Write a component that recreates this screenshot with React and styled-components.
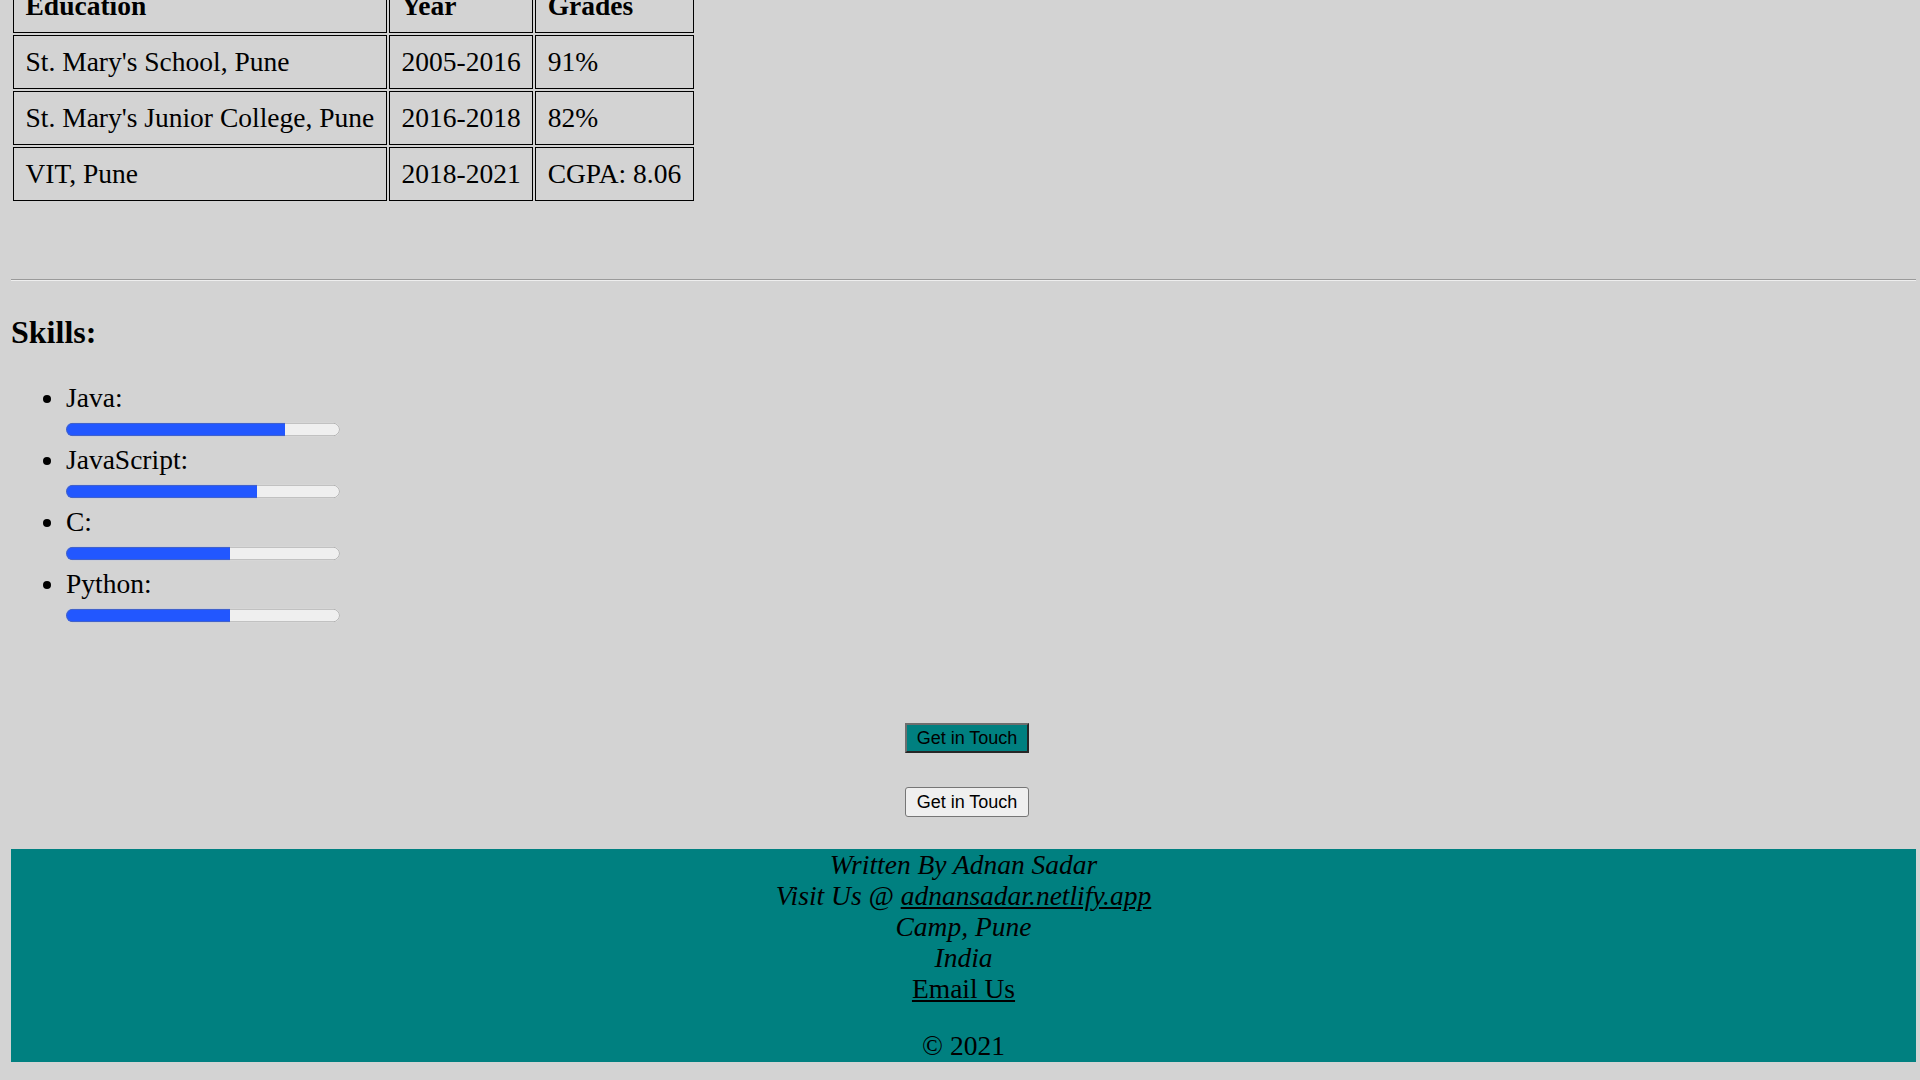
import React, { useLayoutEffect, useRef } from "react";
import styled, { createGlobalStyle } from "styled-components";

const Global = createGlobalStyle`
  html, body {
    margin: 0;
    padding: 0;
    background: #d3d3d3;
  }
  body {
    font-family: "Liberation Serif", "Times New Roman", serif;
    font-size: 27.5px;
    line-height: 31px;
    color: #000;
  }
  ::-webkit-scrollbar {
    width: 15px;
    height: 15px;
    background: #f1f1f1;
  }
  ::-webkit-scrollbar-track {
    background: #f1f1f1;
  }
  ::-webkit-scrollbar-thumb {
    background: #c1c1c1;
    background-clip: padding-box;
    border-style: solid;
    border-color: transparent;
    border-width: 2px 1px 1px 2px;
  }
  ::-webkit-scrollbar-corner {
    background: #dcdcdc;
  }
  ::-webkit-scrollbar-button:single-button {
    display: block;
    width: 15px;
    height: 15px;
    background-color: #f1f1f1;
    background-repeat: no-repeat;
    background-position: center;
  }
  ::-webkit-scrollbar-button:single-button:vertical:decrement {
    background-image: conic-gradient(from 135deg at 50% 0, #505050 90deg, transparent 0);
    background-size: 8px 4px;
  }
  ::-webkit-scrollbar-button:single-button:vertical:increment {
    background-image: conic-gradient(from -45deg at 50% 100%, #505050 90deg, transparent 0);
    background-size: 8px 4px;
  }
  ::-webkit-scrollbar-button:single-button:horizontal:decrement {
    background-image: conic-gradient(from 45deg at 0 50%, #505050 90deg, transparent 0);
    background-size: 4px 8px;
  }
  ::-webkit-scrollbar-button:single-button:horizontal:increment {
    background-image: conic-gradient(from 225deg at 100% 50%, #505050 90deg, transparent 0);
    background-size: 4px 8px;
  }
`;

const Page = styled.div`
  padding: 0 0 39px 11px;
  width: 1905px;
`;

const Intro = styled.section`
  height: 1746px;
  overflow: hidden;
`;

const Title = styled.h1`
  margin: 0;
  padding-top: 40px;
  font-size: 48px;
  line-height: 56px;
  text-align: center;
`;

const Portrait = styled.div`
  display: flex;
  justify-content: center;
  margin: 30px 0;
`;

const SectionTitle = styled.h2`
  font-size: 32px;
  line-height: 37px;
  font-weight: bold;
  margin: ${(p) => p.$mt || 33}px 0 ${(p) => p.$mb || 31}px;
`;

const Para = styled.p`
  margin: 0 0 27px;
  max-width: 1600px;
`;

const Rule = styled.hr`
  margin: ${(p) => p.$mt || 0}px 0 0;
  border: 0;
  border-top: 1px solid #9a9a9a;
  border-bottom: 1px solid #eeeeee;
  height: 0;
`;

const Table = styled.table`
  border-collapse: separate;
  border-spacing: 2px;
  margin: 0;
  font-size: 27.5px;
`;

const Th = styled.th`
  border: 1px solid #000;
  padding: 9.5px 11.5px 11.5px;
  line-height: 31px;
  text-align: left;
  font-weight: bold;
  white-space: nowrap;
  width: ${(p) => p.$w}px;
`;

const Td = styled.td`
  border: 1px solid #000;
  padding: 9.5px 11.5px 11.5px;
  line-height: 31px;
  text-align: left;
  white-space: nowrap;
`;

const SkillList = styled.ul`
  margin: 31px 0 0;
  padding-left: 55px;
  list-style: disc;
`;

const SkillItem = styled.li`
  font-size: 27.5px;
  line-height: 31px;
`;

const SkillBar = styled.progress`
  width: 274px;
  height: 27px;
  font-size: 27px;
  vertical-align: -0.2em;
  margin: 0;
  accent-color: #2257ff;
`;

const ButtonStack = styled.div`
  display: flex;
  flex-direction: column;
  align-items: center;
  gap: 34px;
  padding: 93px 0 32px 7px;
`;

const TouchButton = styled.button`
  box-sizing: border-box;
  width: 124px;
  height: 30px;
  padding: 0;
  font-family: "Liberation Sans", Arial, sans-serif;
  font-size: 18px;
  color: #000;
  cursor: pointer;
  background: ${(p) => (p.$teal ? "#008080" : "#efefef")};
  border-style: solid;
  border-width: ${(p) => (p.$teal ? "2px" : "1px")};
  border-color: ${(p) =>
    p.$teal ? "#6e6e6e #262626 #262626 #6e6e6e" : "#767676"};
  border-radius: ${(p) => (p.$teal ? "0" : "3px")};
`;

const Footer = styled.footer`
  width: 1905px;
  background: #008080;
  text-align: center;
  font-size: 27.5px;
  line-height: 31px;
`;

const Address = styled.address`
  font-style: italic;
`;

const FooterLink = styled.a`
  color: #000;
  text-decoration: underline;
`;

const Copyright = styled.p`
  margin: 26px 0 0;
  padding-bottom: 1px;
`;

const education = [
  ["St. Mary's School, Pune", "2005-2016", "91%"],
  ["St. Mary's Junior College, Pune", "2016-2018", "82%"],
  ["VIT, Pune", "2018-2021", "CGPA: 8.06"],
];

const skills = [
  ["Java", 80],
  ["JavaScript", 70],
  ["C", 60],
  ["Python", 60],
];

export default function App() {
  const footerRef = useRef(null);

  useLayoutEffect(() => {
    const el = footerRef.current;
    if (!el) return;
    const r = el.getBoundingClientRect();
    window.scrollTo(0, r.bottom + window.scrollY - 1062);
  }, []);

  return (
    <>
      <Global />
      <Page>
        <Intro>
          <Title>Adnan Sadar</Title>
          <Portrait>
            <svg width="260" height="260" viewBox="0 0 260 260">
              <rect width="260" height="260" fill="#b9b9b9" />
              <circle cx="130" cy="100" r="52" fill="#8a8a8a" />
              <path d="M40 260c0-60 40-95 90-95s90 35 90 95z" fill="#8a8a8a" />
            </svg>
          </Portrait>
          <Rule $mt={10} />
          <SectionTitle>About Me:</SectionTitle>
          <Para>
            Hi! I am Adnan Sadar, a Computer Engineering graduate from Pune. I
            enjoy building web applications and learning new technologies.
          </Para>
          <Para>
            I like solving problems, writing clean code and working with
            people who love what they do.
          </Para>
          <Rule $mt={40} />
          <SectionTitle>Education:</SectionTitle>
        </Intro>
        <Table>
          <thead>
            <tr>
              <Th $w={349}>Education</Th>
              <Th $w={119}>Year</Th>
              <Th $w={134}>Grades</Th>
            </tr>
          </thead>
          <tbody>
            {education.map(([school, year, grade]) => (
              <tr key={school}>
                <Td>{school}</Td>
                <Td>{year}</Td>
                <Td>{grade}</Td>
              </tr>
            ))}
          </tbody>
        </Table>
        <Rule $mt={76} />
        <SectionTitle $mt={33} $mb={0}>
          Skills:
        </SectionTitle>
        <SkillList>
          {skills.map(([name, value]) => (
            <SkillItem key={name}>
              {name}:
              <br />
              <SkillBar value={value} max={100} />
            </SkillItem>
          ))}
        </SkillList>
        <ButtonStack>
          <TouchButton $teal>Get in Touch</TouchButton>
          <TouchButton>Get in Touch</TouchButton>
        </ButtonStack>
        <Footer ref={footerRef}>
          <Address>
            Written By Adnan Sadar
            <br />
            Visit Us @ <FooterLink href="#">adnansadar.netlify.app</FooterLink>
            <br />
            Camp, Pune
            <br />
            India
          </Address>
          <FooterLink href="#">Email Us</FooterLink>
          <Copyright>© 2021</Copyright>
        </Footer>
      </Page>
    </>
  );
}
